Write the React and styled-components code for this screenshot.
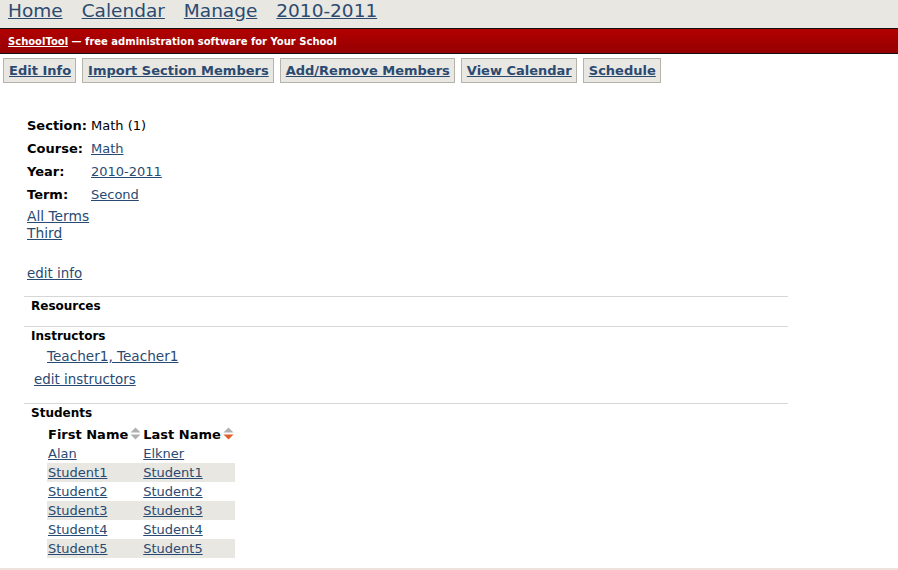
import React from 'react';
import styled, { createGlobalStyle } from 'styled-components';

const GlobalStyle = createGlobalStyle`
  html, body {
    margin: 0;
    padding: 0;
    background: #fff;
    font-family: "DejaVu Sans", Verdana, sans-serif;
    color: #000;
  }
  a {
    color: #294a72;
    text-decoration: underline;
  }
`;

const students = [
  ['Alan', 'Elkner'],
  ['Student1', 'Student1'],
  ['Student2', 'Student2'],
  ['Student3', 'Student3'],
  ['Student4', 'Student4'],
  ['Student5', 'Student5'],
];

const SortIcon = ({ active }) => (
  <SortSvg width="11" height="13" viewBox="0 0 11 13">
    <polygon points="5.5,0.5 10.5,5.5 0.5,5.5" fill="#b0b0b0" />
    <polygon points="0.5,7.5 10.5,7.5 5.5,12.5" fill={active ? '#e0602a' : '#b0b0b0'} />
  </SortSvg>
);

const App = () => {
  return (
    <Page>
      <GlobalStyle />
      <NavBar>
        <NavLink href="#">Home</NavLink>
        <NavLink href="#">Calendar</NavLink>
        <NavLink href="#">Manage</NavLink>
        <NavLink href="#">2010-2011</NavLink>
      </NavBar>
      <Banner>
        <BannerLink href="#">SchoolTool</BannerLink> — free administration software for Your School
      </Banner>
      <Actions>
        <ActionButton href="#">Edit Info</ActionButton>
        <ActionButton href="#">Import Section Members</ActionButton>
        <ActionButton href="#">Add/Remove Members</ActionButton>
        <ActionButton href="#">View Calendar</ActionButton>
        <ActionButton href="#">Schedule</ActionButton>
      </Actions>

      <Content>
        <InfoGrid>
          <Label>Section:</Label>
          <Value>Math (1)</Value>
          <Label>Course:</Label>
          <Value><a href="#">Math</a></Value>
          <Label>Year:</Label>
          <Value><a href="#">2010-2011</a></Value>
          <Label>Term:</Label>
          <Value><a href="#">Second</a></Value>
        </InfoGrid>
        <TermList>
          <a href="#">All Terms</a>
          <a href="#">Third</a>
        </TermList>
        <EditInfo href="#">edit info</EditInfo>

        <Section>
          <SectionTitle>Resources</SectionTitle>
        </Section>
        <Section>
          <SectionTitle>Instructors</SectionTitle>
          <Instructor href="#">Teacher1, Teacher1</Instructor>
          <EditInstructors href="#">edit instructors</EditInstructors>
        </Section>
        <Section>
          <SectionTitle>Students</SectionTitle>
          <Table>
            <thead>
              <tr>
                <Th>First Name<SortIcon /></Th>
                <Th>Last Name<SortIcon active /></Th>
              </tr>
            </thead>
            <tbody>
              {students.map(([first, last], i) => (
                <Row key={i} $odd={i % 2 === 1}>
                  <Td><a href="#">{first}</a></Td>
                  <Td><a href="#">{last}</a></Td>
                </Row>
              ))}
            </tbody>
          </Table>
        </Section>
      </Content>
      <Footer />
    </Page>
  );
};

export default App;

const Page = styled.div`
  width: 898px;
  min-height: 570px;
  display: flex;
  flex-direction: column;
`;

const NavBar = styled.div`
  height: 29px;
  background-color: #e8e7e2;
  border-bottom: 1px solid #111;
  display: flex;
  align-items: flex-start;
  gap: 19px;
  padding: 0 0 0 8px;
  box-sizing: border-box;
`;

const NavLink = styled.a`
  font-size: 18.5px;
  line-height: 22px;
  color: #2c4a70;
`;

const Banner = styled.div`
  height: 24px;
  background: linear-gradient(#b20000, #950000);
  border-bottom: 1px solid #111;
  color: #fff;
  font-size: 10px;
  font-weight: bold;
  display: flex;
  align-items: center;
  padding-left: 8px;
  white-space: pre;
`;

const BannerLink = styled.a`
  color: #fff !important;
`;

const Actions = styled.div`
  display: flex;
  gap: 6px;
  padding: 4px 0 0 3px;
`;

const ActionButton = styled.a`
  display: block;
  background-color: #e8e7e2;
  border: 1px solid #b6b3ab;
  padding: 0 4px 0 5px;
  height: 23px;
  line-height: 23px;
  font-size: 13px;
  font-weight: bold;
  color: #2c4a70;
`;

const Content = styled.div`
  padding: 31px 0 0 24px;
  width: 764px;
  flex: 1;
`;

const InfoGrid = styled.div`
  display: grid;
  grid-template-columns: 64px auto;
  grid-auto-rows: 23px;
  align-items: center;
  padding-left: 3px;
`;

const Label = styled.div`
  font-size: 13px;
  font-weight: bold;
`;

const Value = styled.div`
  font-size: 13px;
`;

const TermList = styled.div`
  display: flex;
  flex-direction: column;
  align-items: flex-start;
  padding-left: 3px;
  margin-top: 2px;
  font-size: 13.8px;
  line-height: 17px;
`;

const EditInfo = styled.a`
  display: inline-block;
  margin: 23px 0 14px 3px;
  font-size: 13.4px;
  line-height: 17px;
`;

const Section = styled.div`
  border-top: 1px solid #d6d6d6;
  padding: 0 0 0 7px;
  display: flex;
  flex-direction: column;
  align-items: flex-start;
  min-height: 29px;
`;

const SectionTitle = styled.div`
  font-size: 12px;
  font-weight: bold;
  line-height: 17px;
  margin-top: 1px;
`;

const Instructor = styled.a`
  font-size: 13.6px;
  line-height: 17px;
  margin: 3px 0 0 16px;
`;

const EditInstructors = styled.a`
  font-size: 13.4px;
  line-height: 17px;
  margin: 6px 0 15px 3px;
`;

const Table = styled.table`
  border-collapse: collapse;
  margin: 3px 0 0 16px;
  font-size: 13px;
`;

const Th = styled.th`
  text-align: left;
  font-weight: bold;
  padding: 0 1px 0 1px;
  height: 19px;
  white-space: nowrap;
`;

const SortSvg = styled.svg`
  vertical-align: -1px;
  margin-left: 2px;
`;

const Row = styled.tr`
  background-color: ${(p) => (p.$odd ? '#e8e7e2' : 'transparent')};
`;

const Td = styled.td`
  height: 19px;
  padding: 0 1px 0 1px;
  line-height: 19px;
`;

const Footer = styled.div`
  height: 2px;
  margin-top: 8px;
  background-color: #ece4dc;
`;
